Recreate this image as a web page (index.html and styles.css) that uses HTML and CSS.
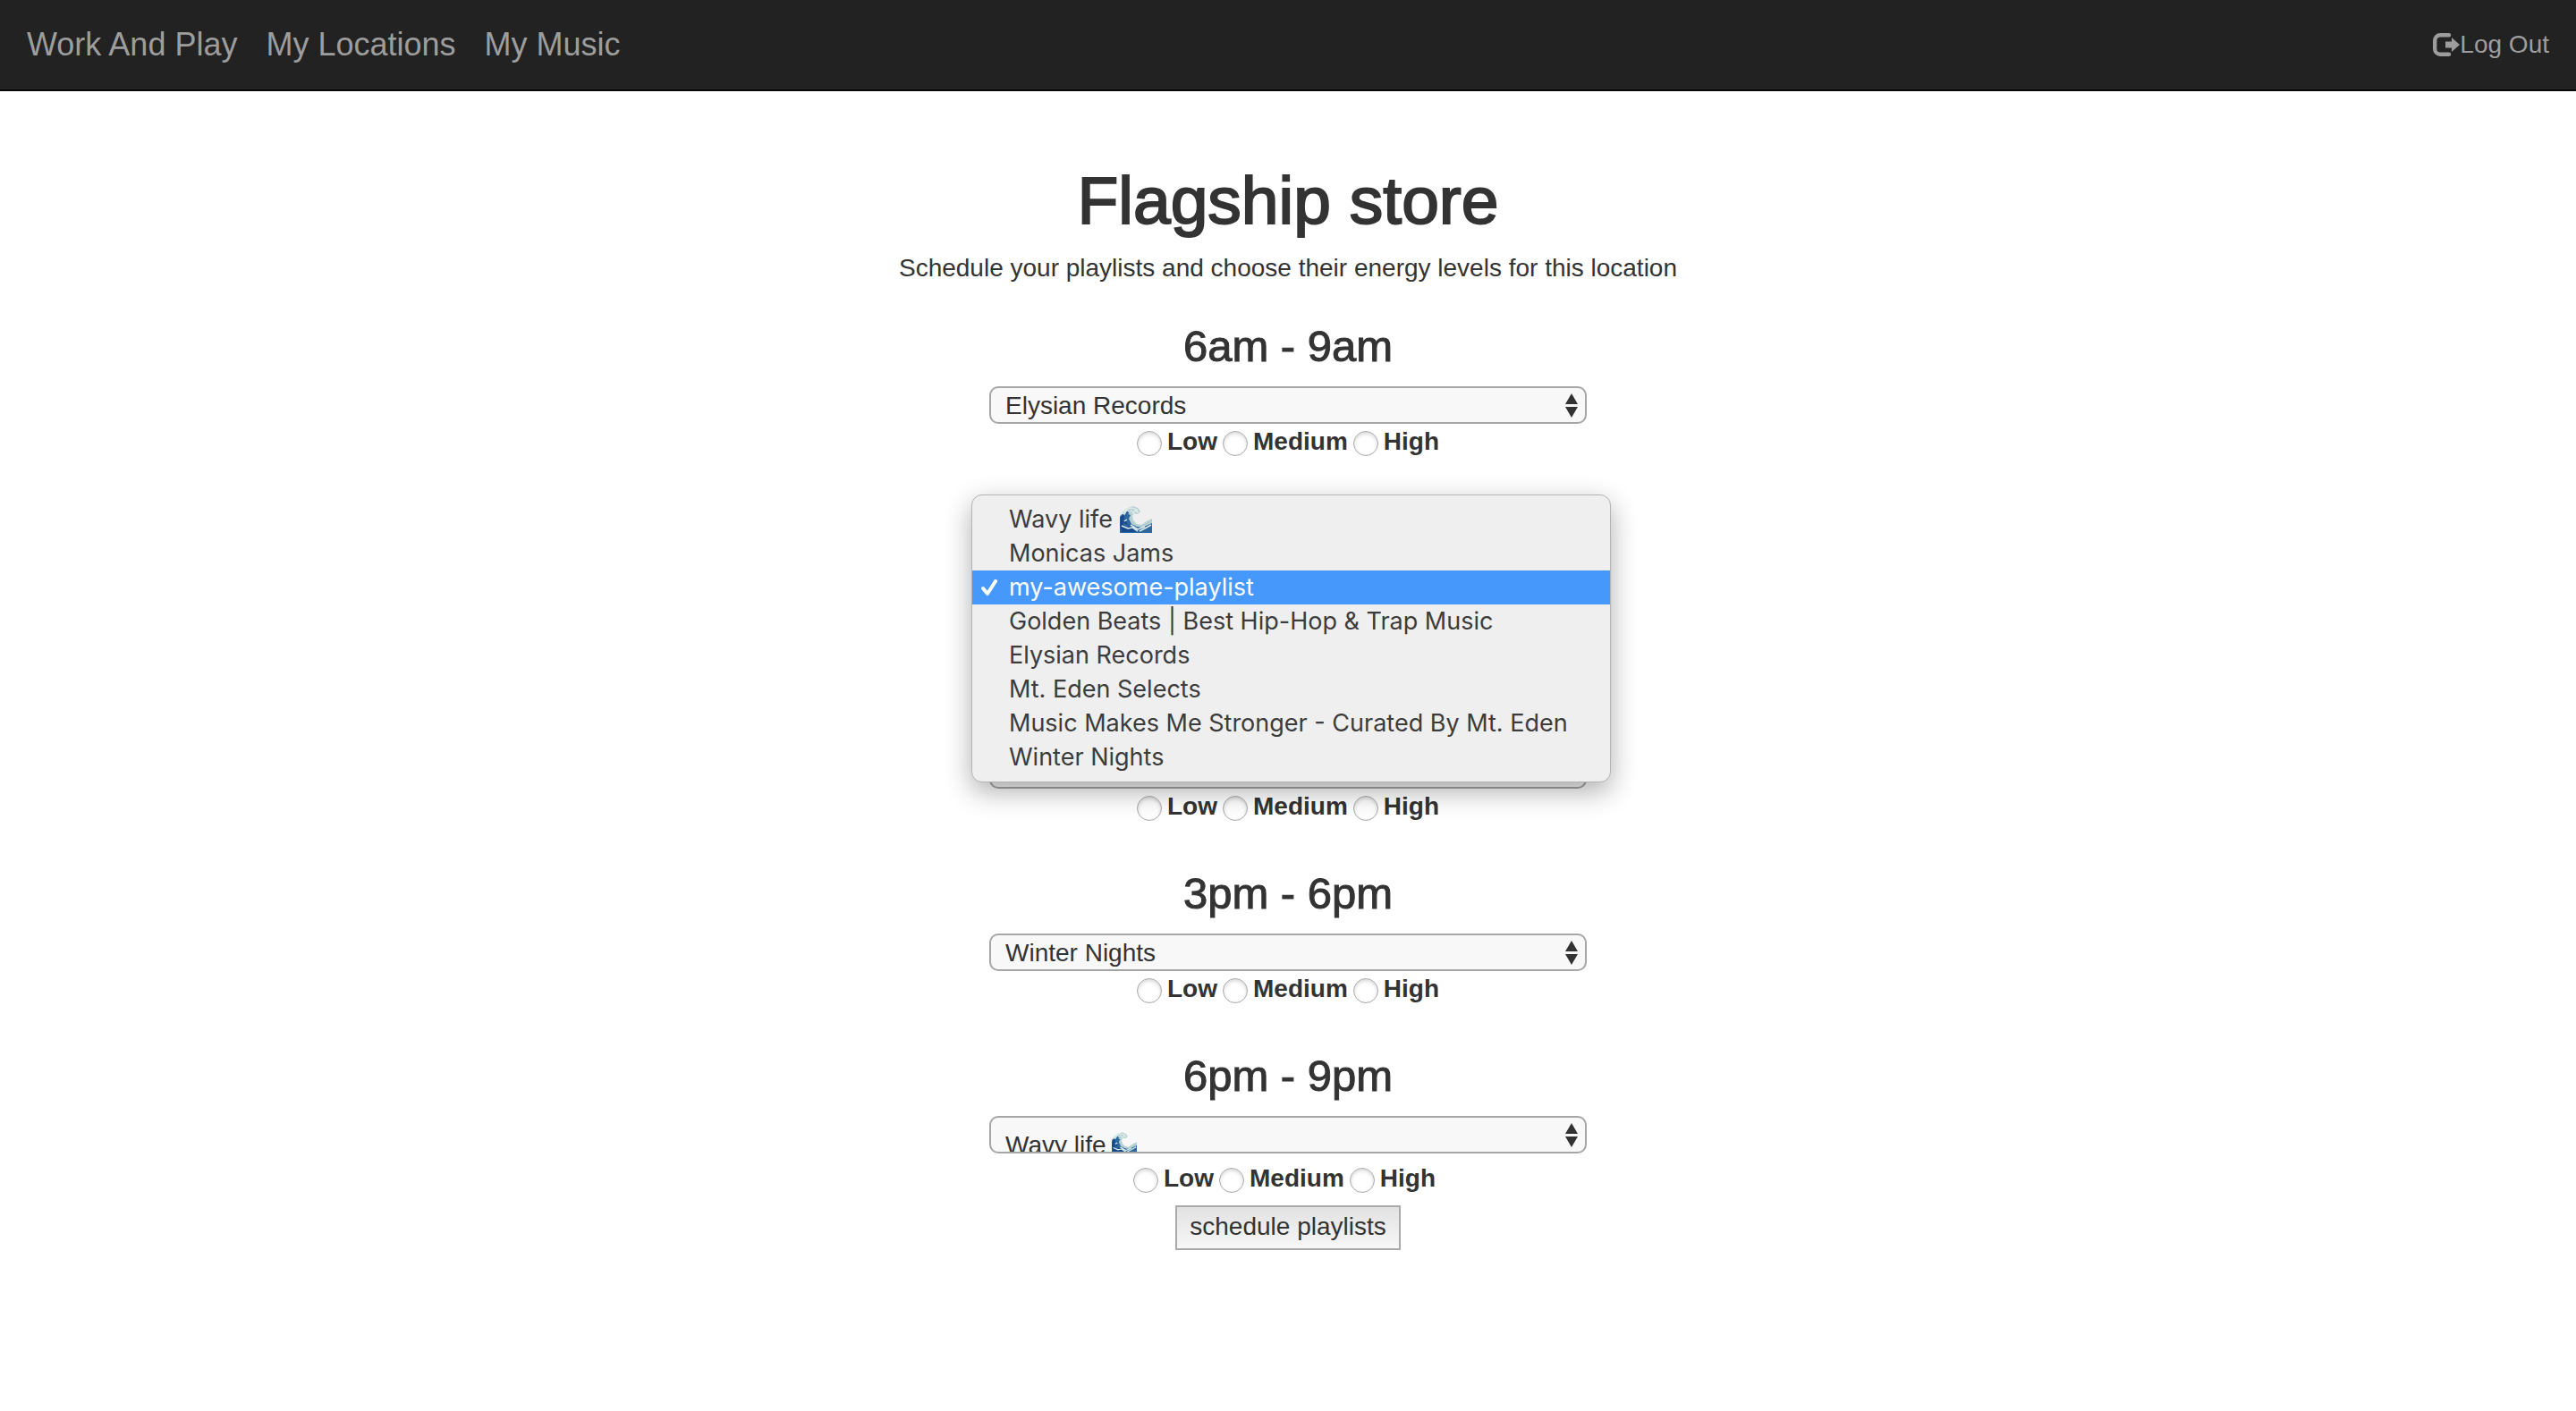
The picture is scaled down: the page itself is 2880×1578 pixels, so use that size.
FILE: index.html
```html
<!DOCTYPE html>
<html lang="en">
<head>
<meta charset="utf-8">
<title>Flagship store - Work And Play</title>
<link rel="stylesheet" href="styles.css">
</head>
<body>
<svg width="0" height="0" class="defs" aria-hidden="true">
  <symbol id="arrows" viewBox="0 0 14 28">
    <path d="M7 0 14 12H0zM0 15h14L7 27z" fill="#333"/>
  </symbol>
  <symbol id="wave" viewBox="0 0 36 30">
    <path d="M0 30V11l3-5 6-4 6-2 5 2 3 4-3 3-4-1-2 3 1 5 4 4 5 1 6-4 6-3v16z" fill="#b5cfd2"/>
    <path d="M0 12 4 7l5-2 4 1-4 3 3 1-2 4 3 6 6 3 6 1 11-5v11H0z" fill="#2d67a0"/>
    <path d="M1 12l3-3 1 5-2 3 4-1 1 5-5-3 3 6 5 1-4-5 6 4 5 5H2l-2-8z" fill="#174a8c"/>
    <path d="M2 9l6-6 6-1 5 2 1 3-3-2-2 3-2-3-2 2-3-3-3 5-2-2-3 3M2 22l7 3 5-1 6 4M12 21l8 5 8-3M22 28l6-3 7-4M5 17l3-2" fill="none" stroke="#dcebe9" stroke-width="1.5"/>
  </symbol>
</svg>

<nav class="navbar">
  <div class="nav-links">
    <a href="#">Work And Play</a>
    <a href="#">My Locations</a>
    <a href="#">My Music</a>
  </div>
  <a class="logout" href="#">
    <svg width="30" height="26" viewBox="0 0 30 26" aria-hidden="true">
      <path d="M18 2.200H8.200a6 6 0 0 0-6 6v9.600a6 6 0 0 0 6 6H18" fill="none" stroke="currentColor" stroke-width="4.400" stroke-linecap="round"/>
      <path d="M14 9.500h7V5l9 8-9 8v-4.500h-7z" fill="currentColor"/>
    </svg>Log Out
  </a>
</nav>

<main>
  <h1>Flagship store</h1>
  <p class="intro">Schedule your playlists and choose their energy levels for this location</p>

  <form class="schedule">
    <section class="slot">
      <h2><label for="p1">6am - 9am</label></h2>
      <div class="picker">
        <select id="p1"><option>Elysian Records</option></select>
        <svg class="arrows" aria-hidden="true"><use href="#arrows"/></svg>
      </div>
      <div class="energy">
        <input type="radio" name="e1" id="e1l"><label for="e1l">Low</label>
        <input type="radio" name="e1" id="e1m"><label for="e1m">Medium</label>
        <input type="radio" name="e1" id="e1h"><label for="e1h">High</label>
      </div>
    </section>

    <section class="slot slot-open">
      <h2><label for="p2">9am - 12pm</label></h2>
      <div class="picker">
        <select id="p2"><option>my-awesome-playlist</option></select>
        <ul class="menu" role="listbox" aria-label="Playlists">
          <li role="option">Wavy life <svg class="emoji" role="img" aria-label="wave"><use href="#wave"/></svg></li>
          <li role="option">Monicas Jams</li>
          <li role="option" aria-selected="true" class="selected"><svg class="check" viewBox="0 0 18 18" aria-hidden="true"><path d="M2 10l5 6L16 2" fill="none" stroke="#fff" stroke-width="4" stroke-linecap="round" stroke-linejoin="round"/></svg>my-awesome-playlist</li>
          <li role="option">Golden Beats | Best Hip-Hop &amp; Trap Music</li>
          <li role="option">Elysian Records</li>
          <li role="option">Mt. Eden Selects</li>
          <li role="option">Music Makes Me Stronger - Curated By Mt. Eden</li>
          <li role="option">Winter Nights</li>
        </ul>
      </div>
      <div class="energy">
        <input type="radio" name="e2" id="e2l"><label for="e2l">Low</label>
        <input type="radio" name="e2" id="e2m"><label for="e2m">Medium</label>
        <input type="radio" name="e2" id="e2h"><label for="e2h">High</label>
      </div>
    </section>

    <section class="slot slot-under">
      <h2><label for="p3">12pm - 3pm</label></h2>
      <div class="picker">
        <select id="p3"><option></option></select>
      </div>
      <div class="energy">
        <input type="radio" name="e3" id="e3l"><label for="e3l">Low</label>
        <input type="radio" name="e3" id="e3m"><label for="e3m">Medium</label>
        <input type="radio" name="e3" id="e3h"><label for="e3h">High</label>
      </div>
    </section>

    <section class="slot">
      <h2><label for="p4">3pm - 6pm</label></h2>
      <div class="picker">
        <select id="p4"><option>Winter Nights</option></select>
        <svg class="arrows" aria-hidden="true"><use href="#arrows"/></svg>
      </div>
      <div class="energy">
        <input type="radio" name="e4" id="e4l"><label for="e4l">Low</label>
        <input type="radio" name="e4" id="e4m"><label for="e4m">Medium</label>
        <input type="radio" name="e4" id="e4h"><label for="e4h">High</label>
      </div>
    </section>

    <section class="slot slot-last">
      <h2><label for="p5">6pm - 9pm</label></h2>
      <div class="picker">
        <select id="p5"><option>Wavy life</option></select>
        <svg class="picker-emoji" viewBox="0 0 28 22" aria-hidden="true"><use href="#wave" width="28" height="24"/></svg>
        <svg class="arrows" aria-hidden="true"><use href="#arrows"/></svg>
      </div>
      <div class="energy">
        <input type="radio" name="e5" id="e5l"><label for="e5l">Low</label>
        <input type="radio" name="e5" id="e5m"><label for="e5m">Medium</label>
        <input type="radio" name="e5" id="e5h"><label for="e5h">High</label>
      </div>
    </section>

    <button type="submit">schedule playlists</button>
  </form>
</main>
</body>
</html>
```
FILE: styles.css
```css
* {
  box-sizing: border-box;
}

body {
  margin: 0;
  background: #fff;
  color: #333;
  font: 28px/40px "Liberation Sans", Arial, sans-serif;
}

.defs {
  position: absolute;
}

.navbar {
  display: flex;
  align-items: center;
  justify-content: space-between;
  height: 102px;
  padding: 0 30px;
  background: #222;
  border-bottom: 2px solid #080808;
}

.navbar a {
  color: #9d9d9d;
  text-decoration: none;
}

.nav-links {
  display: flex;
  gap: 32px;
  font-size: 36px;
}

.logout {
  display: flex;
  align-items: center;
}

main {
  padding: 82px 30px;
  text-align: center;
}

h1 {
  margin: 0 0 16px;
  font-size: 75px;
  line-height: 80px;
  font-weight: 400;
  -webkit-text-stroke: 2px #333;
}

.intro {
  margin: 0 0 40px;
}

.schedule {
  display: flex;
  flex-direction: column;
  align-items: center;
}

.slot {
  width: 100%;
  max-width: 668px;
  margin-bottom: 50px;
}

h2 {
  margin: 0 0 18px;
  font-size: 49px;
  line-height: 54px;
  font-weight: 400;
  -webkit-text-stroke: 1px #333;
}

.picker {
  position: relative;
  height: 42px;
}

select {
  display: block;
  appearance: none;
  width: 100%;
  height: 42px;
  padding: 0 44px 2px 16px;
  border: 2px solid #a6a6a6;
  border-radius: 10px;
  background: #f8f8f8;
  color: #333;
  font: inherit;
}

.arrows {
  position: absolute;
  top: 8px;
  right: 10px;
  width: 14px;
  height: 28px;
  pointer-events: none;
}

.energy {
  display: flex;
  align-items: center;
  justify-content: center;
  gap: 6px;
  height: 40px;
  font-weight: 700;
}

input[type="radio"] {
  appearance: none;
  width: 28px;
  height: 28px;
  margin: 4px 0 0;
  border: 1px solid #aaa;
  border-radius: 50%;
  background: #fff;
  box-shadow: inset 0 2px 4px rgba(0, 0, 0, 0.16);
}

/* The open menu lies over this slot and the heading of the next one. */
.slot-open h2,
.slot-open select,
.slot-open .energy,
.slot-under h2 {
  visibility: hidden;
}

.menu {
  position: absolute;
  z-index: 1;
  top: -83px;
  left: -20px;
  right: -27px;
  margin: 0;
  padding: 8px 0;
  border: 1px solid #b4b4b4;
  border-radius: 12px;
  background: #efefef;
  box-shadow: 0 10px 30px rgba(0, 0, 0, 0.32);
  list-style: none;
  text-align: left;
  font: 27px/38px Inter, "Liberation Sans", sans-serif;
}

.menu li {
  position: relative;
  height: 38px;
  padding-left: 41px;
  color: #3c3c3c;
  white-space: nowrap;
}

.menu .selected {
  background: #4698fb;
  color: #fff;
}

.check {
  position: absolute;
  top: 10px;
  left: 10px;
  width: 18px;
  height: 18px;
}

.emoji {
  width: 36px;
  height: 30px;
  vertical-align: -6px;
}

.slot-last {
  margin-bottom: 10px;
}

.slot-last select {
  padding-top: 11px;
  padding-bottom: 0;
}

.slot-last .energy {
  margin-top: 8px;
  padding-right: 8px;
}

.picker-emoji {
  position: absolute;
  left: 137px;
  bottom: 2px;
  width: 28px;
  height: 22px;
  pointer-events: none;
}

button {
  height: 50px;
  padding: 0 14px 2px;
  border: 2px solid #aaa;
  border-radius: 0;
  background: linear-gradient(#e2e2e2, #f7f7f7);
  color: #333;
  font: inherit;
}
```
